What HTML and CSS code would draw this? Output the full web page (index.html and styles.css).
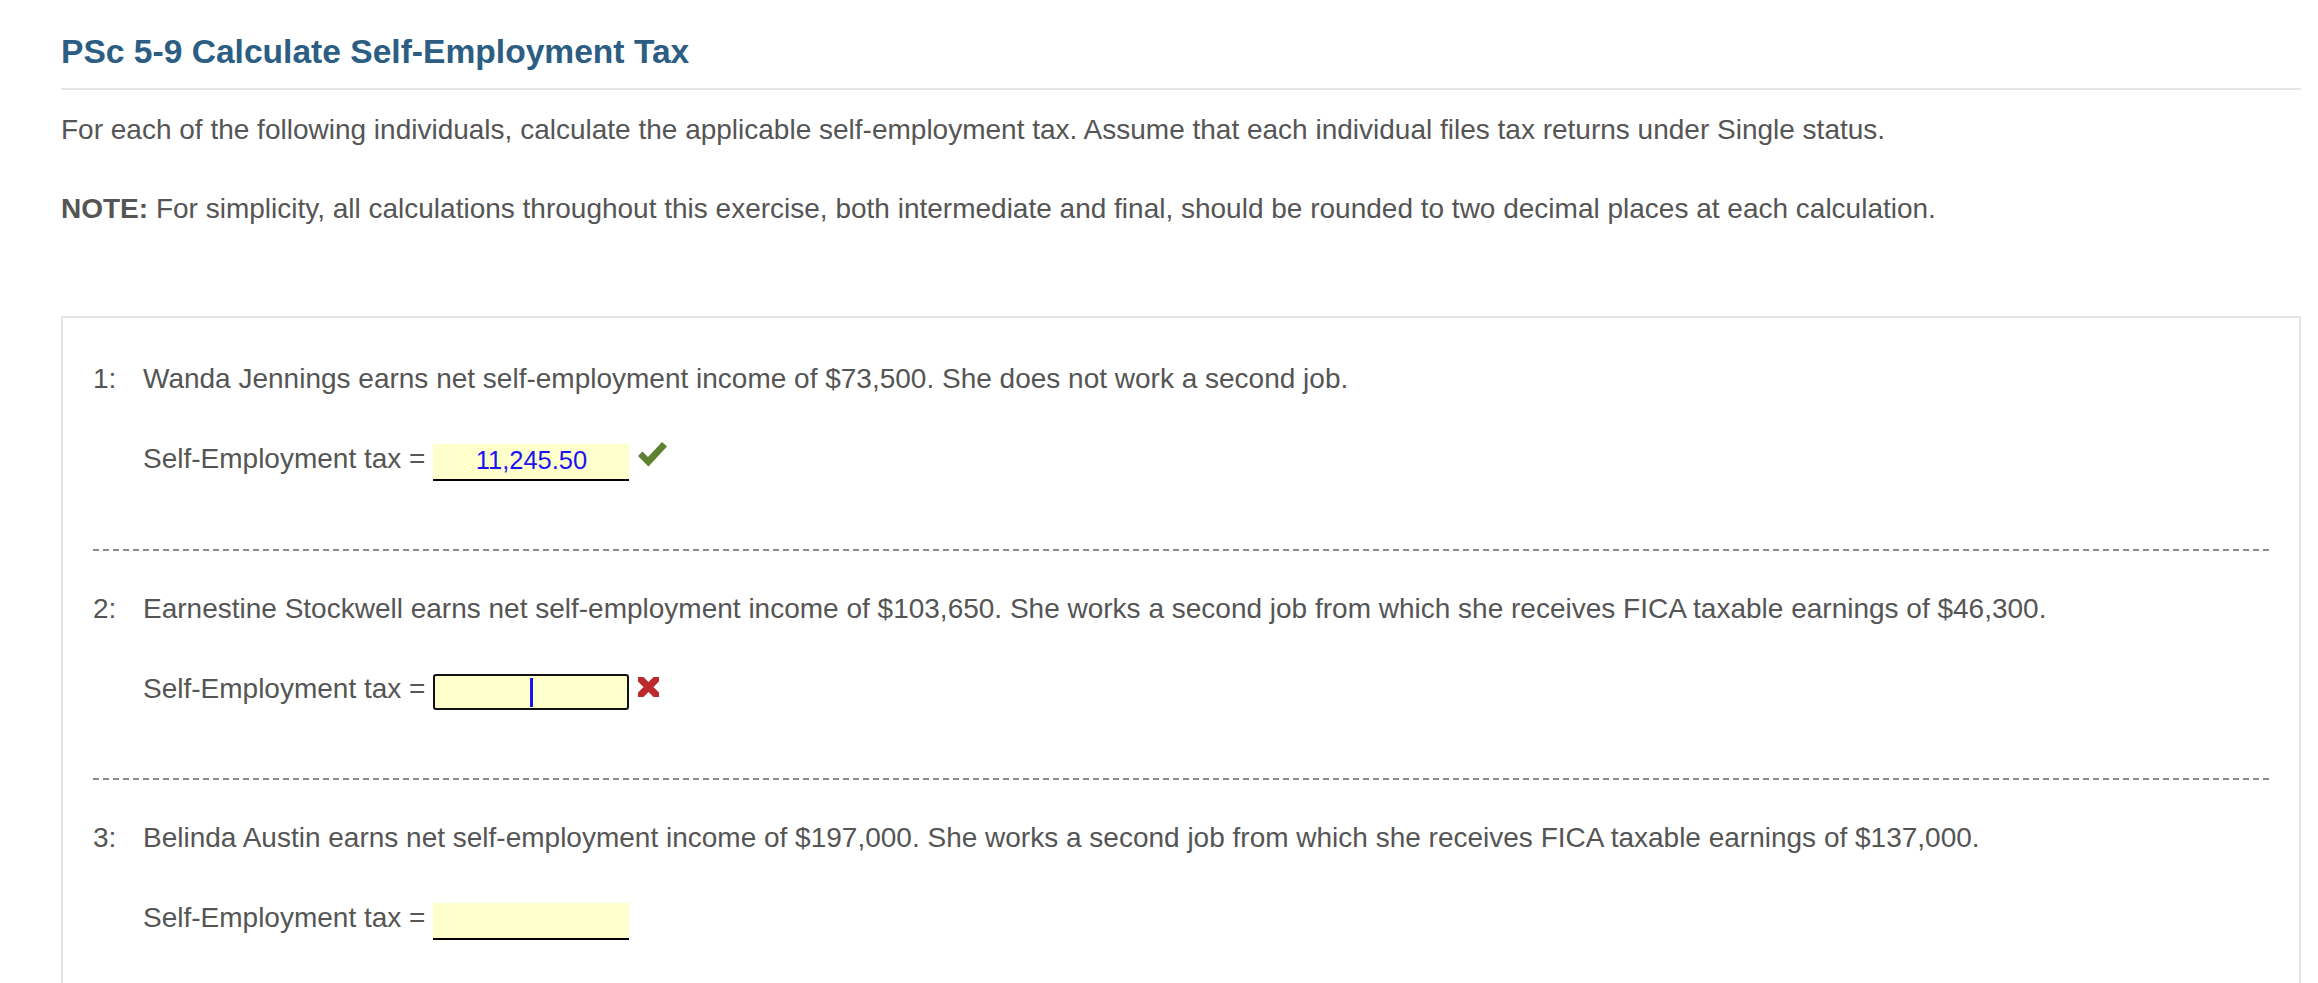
FILE: index.html
```html
<html>
<head>
<meta charset="UTF-8">
<title>PSc 5-9 Calculate Self-Employment Tax</title>
<link rel="stylesheet" href="styles.css">
</head>
<body>
<h2 class="title">PSc 5-9 Calculate Self-Employment Tax</h2>

<p class="intro">For each of the following individuals, calculate the applicable self-employment tax. Assume that each individual files tax returns under Single status.</p>
<p class="note"><b>NOTE:</b> For simplicity, all calculations throughout this exercise, both intermediate and final, should be rounded to two decimal places at each calculation.</p>

<div class="questions">

	<div class="item first">
		<div class="question">
			<span class="num">1:</span>
			<span>Wanda Jennings earns net self-employment income of $73,500. She does not work a second job.</span>
		</div>
		<div class="answer">
			<span class="label">Self-Employment tax =</span>
			<span class="field">11,245.50</span>
			<svg class="mark" width="31" height="27" viewBox="0 0 31 27">
				<path d="M1 15 L5.5 10.5 L11 16 L25 1 L30 5.5 L11.5 25.5 Z" fill="#5f8232"/>
			</svg>
		</div>
	</div>

	<div class="item">
		<div class="question">
			<span class="num">2:</span>
			<span>Earnestine Stockwell earns net self-employment income of $103,650. She works a second job from which she receives FICA taxable earnings of $46,300.</span>
		</div>
		<div class="answer">
			<span class="label">Self-Employment tax =</span>
			<span class="field active"><span class="caret"></span></span>
			<svg class="mark cross" width="25" height="24" viewBox="0 0 25 24">
				<path d="M4.5 4 L20.5 20 M20.5 4 L4.5 20" stroke="#bd2a2e" stroke-width="7" stroke-linecap="round" filter="url(#soft)"/>
				<filter id="soft"><feGaussianBlur stdDeviation="0.6"/></filter>
			</svg>
		</div>
	</div>

	<div class="item last">
		<div class="question">
			<span class="num">3:</span>
			<span>Belinda Austin earns net self-employment income of $197,000. She works a second job from which she receives FICA taxable earnings of $137,000.</span>
		</div>
		<div class="answer">
			<span class="label">Self-Employment tax =</span>
			<span class="field"></span>
		</div>
	</div>

</div>
</body>
</html>
```

FILE: styles.css
```css
body{
	margin:0;
	padding:0 17px 0 61px;
	font-family:"Liberation Sans", Arial, sans-serif;
	font-size:28px;
	color:#555;
	background:white;
}

.title{
	margin:0;
	padding:33px 0 17px;
	font-size:33.6px;
	line-height:38px;
	font-weight:bold;
	color:#2c5d82;
	border-bottom:2px solid #e6e6e6;
}

.intro, .note{
	margin:0;
	line-height:40px;
}

.intro{
	margin-top:20px;
}

.note{
	margin-top:39px;
}

.questions{
	margin-top:87px;
	border:2px solid #e4e4e4;
	padding:0 29px 0 30px;
}

.item{
	padding:38px 0 70px;
	background:repeating-linear-gradient(90deg, #8c8c8c 0 6px, transparent 6px 10px) left bottom / 100% 2px no-repeat;
}

.item.first{
	padding-top:41px;
}

.item.last{
	padding-bottom:69px;
	background:none;
}

.question{
	display:flex;
	line-height:40px;
	margin-bottom:40px;
}

.num{
	width:50px;
	flex:none;
}

.answer{
	display:flex;
	align-items:flex-start;
	padding-left:50px;
	line-height:40px;
}

.field{
	box-sizing:border-box;
	width:196px;
	height:37px;
	margin:5px 0 0 8px;
	background:#ffffcc;
	border-bottom:2px solid #000;
	color:#1a14f5;
	font-size:25.5px;
	line-height:32px;
	text-align:center;
}

.field.active{
	height:36px;
	border:2px solid #111;
	border-radius:3px;
	display:flex;
	justify-content:center;
	align-items:center;
}

.caret{
	width:3px;
	height:29px;
	background:#1a14f5;
}

.mark{
	margin:2px 0 0 8px;
}

.mark.cross{
	margin:6px 0 0 7px;
}
```
